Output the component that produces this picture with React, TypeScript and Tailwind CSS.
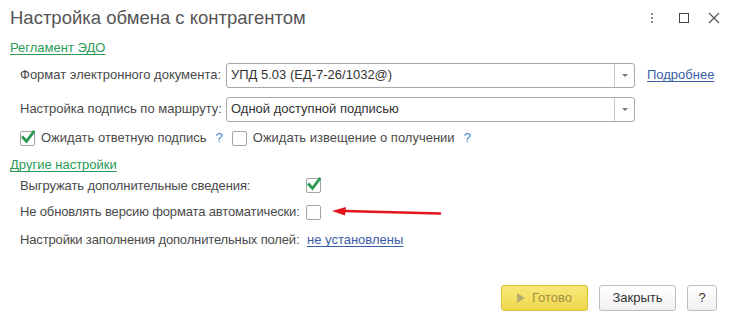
import React from "react";

function Check({ checked }: { checked?: boolean }) {
  return (
    <span className="relative flex h-[15px] w-[15px] shrink-0 items-center justify-center rounded-[2px] border border-[#a3a3a3] bg-white">
      {checked && (
        <svg width="16" height="16" viewBox="0 0 16 16" className="absolute left-[-1px] top-[-3px]">
          <path d="M3 8.5 L6.5 12.3 L13.5 3" fill="none" stroke="#2b9a52" strokeWidth="2.8" strokeLinecap="square" />
        </svg>
      )}
    </span>
  );
}

function Select({ value }: { value: string }) {
  return (
    <div className="flex h-[25px] w-[409px] rounded-[3px] border border-[#a9a9a9] bg-white">
      <div className="flex flex-1 items-center pl-[4px] text-[13px] text-[#333]">{value}</div>
      <div className="flex w-[20px] items-center justify-center border-l border-[#c8c8c8]">
        <span className="h-0 w-0 border-x-[3px] border-t-[3px] border-x-transparent border-t-[#777]" />
      </div>
    </div>
  );
}

export default function App() {
  return (
    <div
      className="relative h-[319px] w-[732px] overflow-hidden bg-white text-[13px] text-[#4a4a4a]"
      style={{ fontFamily: '"Liberation Sans", Arial, sans-serif' }}
    >
      <div className="flex h-[36px] items-center pl-[10px] pr-[12px]">
        <span className="text-[18.5px] text-[#555]">Настройка обмена с контрагентом</span>
        <div className="ml-auto flex items-center">
          <span className="flex flex-col gap-[2px]">
            <span className="h-[2px] w-[2px] bg-[#888]" />
            <span className="h-[2px] w-[2px] bg-[#888]" />
            <span className="h-[2px] w-[2px] bg-[#888]" />
          </span>
          <span className="ml-[26px] h-[10px] w-[10px] border border-[#444]" />
          <svg width="12" height="12" viewBox="0 0 12 12" className="ml-[19px]">
            <path d="M1 1 L11 11 M11 1 L1 11" stroke="#555" strokeWidth="1.2" />
          </svg>
        </div>
      </div>

      <div className="flex h-[24px] items-center pl-[10px]">
        <span className="text-[#2a9a55] underline underline-offset-2">Регламент ЭДО</span>
      </div>

      <div className="flex h-[30px] items-center pl-[20px]">
        <span className="w-[206px]">Формат электронного документа:</span>
        <Select value="УПД 5.03 (ЕД-7-26/1032@)" />
        <span className="ml-[12px] text-[#3a5ea8] underline underline-offset-2">Подробнее</span>
      </div>

      <div className="flex h-[38px] items-center pl-[20px]">
        <span className="w-[206px]">Настройка подпись по маршруту:</span>
        <Select value="Одной доступной подписью" />
      </div>

      <div className="flex h-[20px] items-center pl-[20px]">
        <Check checked />
        <span className="ml-[6px]">Ожидать ответную подпись</span>
        <span className="ml-[9px] text-[#3a86c8]">?</span>
        <span className="ml-[9px]">
          <Check />
        </span>
        <span className="ml-[6px]">Ожидать извещение о получении</span>
        <span className="ml-[9px] text-[#3a86c8]">?</span>
      </div>

      <div className="mt-[7px] flex h-[20px] items-center pl-[10px]">
        <span className="text-[#2a9a55] underline underline-offset-2">Другие настройки</span>
      </div>

      <div className="flex h-[21px] items-center pl-[20px]">
        <span className="w-[286px] tracking-[-0.1px]">Выгружать дополнительные сведения:</span>
        <Check checked />
      </div>

      <div className="mt-[5px] flex h-[22px] items-center pl-[20px]">
        <span className="w-[286px] whitespace-nowrap tracking-[-0.15px]">Не обновлять версию формата автоматически:</span>
        <Check />
        <svg width="112" height="12" viewBox="0 0 112 12" className="ml-[11px]">
          <path d="M12 5 L108 7.5" stroke="#e3141b" strokeWidth="2.6" strokeLinecap="round" />
          <path d="M0 5 L14 1 L13 9.5 Z" fill="#e3141b" />
        </svg>
      </div>

      <div className="mt-[6px] flex h-[22px] items-center pl-[20px]">
        <span className="w-[287px] whitespace-nowrap tracking-[-0.15px]">Настройки заполнения дополнительных полей:</span>
        <span className="text-[#3a5ea8] underline underline-offset-2">не установлены</span>
      </div>

      <div className="mt-[34px] flex h-[26px] items-center justify-end gap-[11px] pr-[15px]">
        <button className="flex h-[26px] w-[87px] items-center justify-center gap-[7px] rounded-[3px] border border-[#d6c035] bg-gradient-to-b from-[#f8e879] to-[#f0d84a] text-[13px] text-[#a08f45]">
          <span className="h-0 w-0 border-y-[5px] border-l-[8px] border-y-transparent border-l-[#b9ad6a]" />
          Готово
        </button>
        <button className="h-[26px] w-[77px] rounded-[3px] border border-[#bdbdbd] bg-gradient-to-b from-white to-[#f1f1f1] text-[13px] text-[#333]">
          Закрыть
        </button>
        <button className="h-[26px] w-[30px] rounded-[3px] border border-[#bdbdbd] bg-gradient-to-b from-white to-[#f1f1f1] text-[13px] text-[#333]">
          ?
        </button>
      </div>
    </div>
  );
}
